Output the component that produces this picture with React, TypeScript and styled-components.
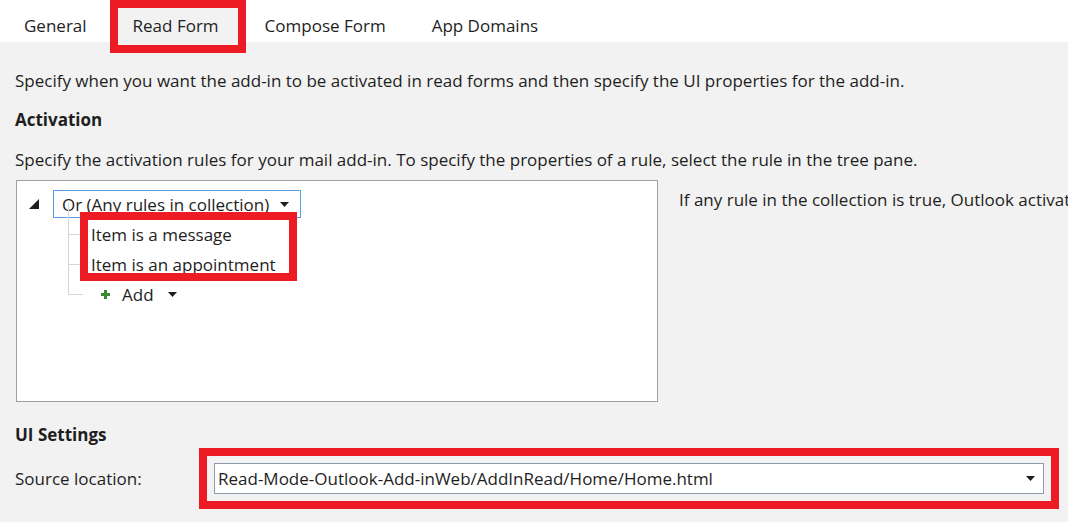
import React from "react";
import styled, { createGlobalStyle } from "styled-components";

const Global = createGlobalStyle`
  html, body { margin: 0; padding: 0; }
  body {
    background: #f2f2f2;
    font-family: "Segoe UI", "Open Sans", "Noto Sans", sans-serif;
    color: #1e1e1e;
    width: 1068px;
    height: 522px;
    overflow: hidden;
  }
`;

const Page = styled.div`
  width: 1068px;
  height: 522px;
  display: flex;
  flex-direction: column;
  overflow: hidden;
`;

const TabBar = styled.div`
  height: 42px;
  background: #ffffff;
  display: flex;
  padding-left: 1px;
  flex-shrink: 0;
`;

const Tab = styled.div<{ $active?: boolean }>`
  position: relative;
  padding: 15px 23px 0;
  line-height: 22px;
  font-size: 17px;
  background: ${(p) => (p.$active ? "#f2f2f2" : "transparent")};
  color: #1e1e1e;
`;

const Highlight = styled.div<{ $top: number; $left: number; $right: number; $bottom: number }>`
  position: absolute;
  top: ${(p) => p.$top}px;
  left: ${(p) => p.$left}px;
  right: ${(p) => p.$right}px;
  bottom: ${(p) => p.$bottom}px;
  border: 8px solid #ed1c24;
  pointer-events: none;
`;

const Content = styled.div`
  padding: 0 0 0 15px;
  display: flex;
  flex-direction: column;
`;

const Para = styled.div<{ $mt: number }>`
  margin-top: ${(p) => p.$mt}px;
  font-size: 17px;
  line-height: 22px;
  white-space: nowrap;
`;

const Heading = styled.div<{ $mt: number }>`
  margin-top: ${(p) => p.$mt}px;
  font-size: 17px;
  line-height: 22px;
  font-weight: 700;
`;

const ActivationRow = styled.div`
  margin-top: 9px;
  display: flex;
  align-items: flex-start;
  gap: 21px;
  margin-left: 1px;
`;

const TreeBox = styled.div`
  position: relative;
  width: 640px;
  height: 220px;
  background: #ffffff;
  border: 1px solid #a0a0a0;
  flex-shrink: 0;
`;

const Tree = styled.div`
  padding-top: 8px;
  display: flex;
  flex-direction: column;
`;

const TreeRow = styled.div<{ $indent: number }>`
  height: 30px;
  display: flex;
  align-items: center;
  padding-left: ${(p) => p.$indent}px;
  font-size: 17px;
  position: relative;
`;

const Expander = styled.svg`
  width: 10px;
  height: 10px;
  margin-right: 14px;
`;

const RuleCombo = styled.div`
  height: 28px;
  width: 248px;
  box-sizing: border-box;
  border: 1px solid #5b9fe3;
  display: flex;
  align-items: center;
  padding-left: 8px;
  padding-right: 11px;
  justify-content: space-between;
`;

const Caret = styled.svg`
  width: 9px;
  height: 5px;
  flex-shrink: 0;
`;

const Branch = styled.div<{ $last?: boolean }>`
  position: absolute;
  left: 51px;
  top: ${(p) => (p.$last ? "-31px" : "-16px")};
  width: 14px;
  height: ${(p) => (p.$last ? "46px" : "31px")};
  border-left: 1px solid #d6d6d6;
  border-bottom: 1px solid #d6d6d6;
`;

const AddLabel = styled.span`
  margin-left: 12px;
  margin-right: 14px;
`;

const Description = styled.div`
  margin-top: 9px;
  font-size: 17px;
  line-height: 22px;
  white-space: nowrap;
  flex: 1;
  min-width: 0;
  overflow: hidden;
`;

const SourceRow = styled.div`
  margin-top: 2px;
  display: flex;
  align-items: center;
`;

const Label = styled.div`
  width: 184px;
  font-size: 17px;
  line-height: 22px;
`;

const RedFrame = styled.div`
  border: 8px solid #ed1c24;
  padding: 7px;
  width: 830px;
`;

const Combo = styled.div`
  height: 31px;
  box-sizing: border-box;
  background: #ffffff;
  border: 1px solid #8e9bae;
  display: flex;
  align-items: center;
  justify-content: space-between;
  padding: 0 8px 0 3px;
  font-size: 17px;
  color: #1e1e1e;
`;

const BottomButton = styled.div`
  margin-top: 13px;
  margin-left: 185px;
  width: 89px;
  height: 10px;
  border-top: 1px solid #d0d0d0;
  background: #e8e8e8;
`;

const DownCaret = () => (
  <Caret viewBox="0 0 9 5">
    <path d="M0 0 H9 L4.5 5 Z" fill="#1e1e1e" />
  </Caret>
);

export default function App() {
  return (
    <Page>
      <Global />
      <TabBar>
        <Tab>General</Tab>
        <Tab $active>
          Read Form
          <Highlight $top={0} $left={0} $right={-4} $bottom={-11} />
        </Tab>
        <Tab>Compose Form</Tab>
        <Tab>App Domains</Tab>
      </TabBar>
      <Content>
        <Para $mt={28}>
          Specify when you want the add-in to be activated in read forms and then specify the UI properties for the add-in.
        </Para>
        <Heading $mt={17}>Activation</Heading>
        <Para $mt={18}>
          Specify the activation rules for your mail add-in. To specify the properties of a rule, select the rule in the tree pane.
        </Para>
        <ActivationRow>
          <TreeBox>
            <Tree>
              <TreeRow $indent={12}>
                <Expander viewBox="0 0 10 10">
                  <path d="M10 0 V10 H0 Z" fill="#1e1e1e" />
                </Expander>
                <RuleCombo>
                  <span>Or (Any rules in collection)</span>
                  <DownCaret />
                </RuleCombo>
              </TreeRow>
              <TreeRow $indent={74}>
                <Branch />
                Item is a message
              </TreeRow>
              <TreeRow $indent={74}>
                <Branch />
                Item is an appointment
              </TreeRow>
              <TreeRow $indent={84}>
                <Branch $last />
                <svg width="9" height="9" viewBox="0 0 9 9">
                  <path d="M3 0 H6 V3 H9 V6 H6 V9 H3 V6 H0 V3 H3 Z" fill="#388a34" />
                </svg>
                <AddLabel>Add</AddLabel>
                <DownCaret />
              </TreeRow>
            </Tree>
            <Highlight $top={31} $left={63} $right={360} $bottom={120} />
          </TreeBox>
          <Description>If any rule in the collection is true, Outlook activates the add-in.</Description>
        </ActivationRow>
        <Heading $mt={22}>UI Settings</Heading>
        <SourceRow>
          <Label>Source location:</Label>
          <RedFrame>
            <Combo>
              <span>Read-Mode-Outlook-Add-inWeb/AddInRead/Home/Home.html</span>
              <DownCaret />
            </Combo>
          </RedFrame>
        </SourceRow>
        <BottomButton />
      </Content>
    </Page>
  );
}
